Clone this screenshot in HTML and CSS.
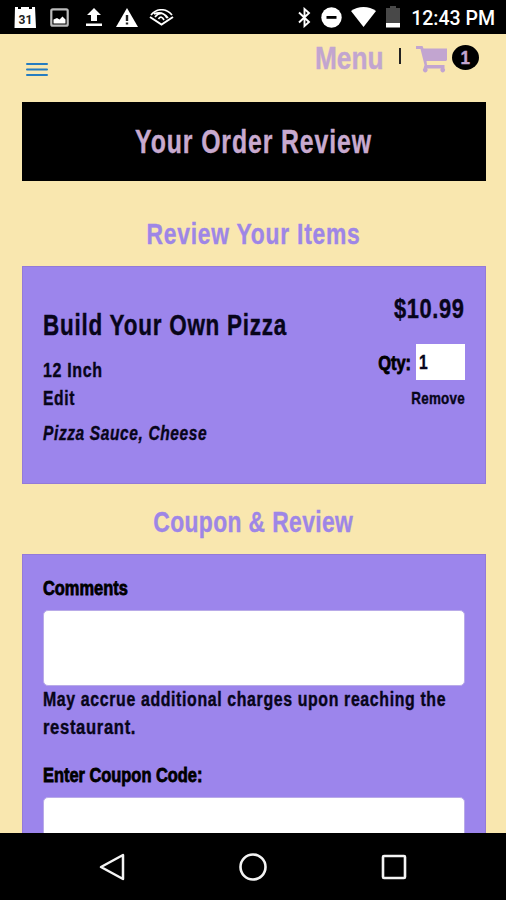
FILE: index.html
```html
<!DOCTYPE html>
<html lang="en">
<head>
<meta charset="utf-8">
<title>Your Order Review</title>
<link rel="stylesheet" href="styles.css">
</head>
<body>
<div class="screen">
  <div class="status">
    <div class="status-left">
      <svg width="23" height="24" viewBox="0 0 23 24"><path fill="#fff" d="M1 2h3v2h3V2h8v2h3V2h3l1 21H.5z"/><text x="11.5" y="18.5" text-anchor="middle" class="cal">31</text></svg>
      <svg class="photo" width="19" height="19" viewBox="0 0 19 19"><rect x="1.300" y="1.300" width="16.400" height="16.400" rx="1.500" fill="none" stroke="#bbb" stroke-width="2.200"/><path fill="#fff" d="M3.500 15.500v-4l3.500-1.500 2.500 1.500 3-3 3 3v4z"/></svg>
      <svg class="upload" width="16" height="18" viewBox="0 0 16 18"><path fill="#fff" d="M8 0l7 7h-4v6H5V7H1zM0 15.500h16V18H0z"/></svg>
      <svg class="warn" width="22" height="19" viewBox="0 0 22 19"><path fill="#fff" d="M11 0l11 19H0z"/><path fill="#222" d="M9.800 7h2.400v6H9.800zM9.800 14.500h2.400v2H9.800z"/></svg>
      <svg class="audible" width="25" height="17" viewBox="0 0 25 17"><g fill="none" stroke="#fff" stroke-width="2"><path d="M1 8l11.500 7.500L24 8"/><path stroke-width="1.700" d="M2 6C8-1 17-1 23 6M6 8c4-5 9-5 12 1M9.500 10c2-3 4-2 5.500 1M5 5c7-3 11 0 14 4"/></g></svg>
    </div>
    <div class="status-right">
      <svg class="bt" width="13" height="21" viewBox="0 0 13 21"><path fill="none" stroke="#fff" stroke-width="1.900" d="M1 5.500l10 9.500-4.500 4V2L11 6 1 15.500"/></svg>
      <svg class="dnd" width="21" height="21" viewBox="0 0 21 21"><circle cx="10.500" cy="10.500" r="10.200" fill="#fff"/><path fill="#000" d="M5.500 9h10v2.800h-10z"/></svg>
      <svg class="wifi" width="25" height="20" viewBox="0 0 25 20"><path fill="#fff" d="M12.500 20L0 4C7-1.300 18-1.300 25 4z"/></svg>
      <svg class="battery" width="14" height="22" viewBox="0 0 14 22"><path fill="#484848" d="M4 0h6v2h4v15H0V2h4z"/><path fill="#fff" d="M0 17h14v4.500H0z"/></svg>
      <span class="clock">12:43 PM</span>
    </div>
  </div>
  <main class="page">
    <header class="top">
      <svg class="burger" width="22" height="15" viewBox="0 0 22 15"><path stroke="#267dc0" stroke-width="2" stroke-linecap="round" d="M1 2h20M1 7.500h20M1 13h20"/></svg>
      <div class="links">
        <span class="menu"><span class="t">Menu</span></span>
        <span class="divider"></span>
        <svg class="cart" width="31" height="27" viewBox="0 0 31 27"><path fill="#c2a5d0" d="M0 0h6.500l1 2.500H31V14l-1 1H10.500l.5 4h17.500v3.500a2.300 2.300 0 1 1-3.500 0h-14a2.300 2.300 0 1 1-3.500 0L8.500 19 4.500 3H0z"/></svg>
        <span class="count"><span class="t">1</span></span>
      </div>
    </header>
    <h1 class="banner"><span class="t">Your Order Review</span></h1>
    <h2 class="heading first"><span class="t">Review Your Items</span></h2>
    <section class="card item">
      <div class="desc">
        <h3 class="name"><span class="t">Build Your Own Pizza</span></h3>
        <div class="line size"><span class="t">12 Inch</span></div>
        <div class="line edit"><span class="t">Edit</span></div>
        <div class="line toppings"><span class="t">Pizza Sauce, Cheese</span></div>
      </div>
      <div class="amount">
        <div class="price"><span class="t">$10.99</span></div>
        <div class="qty"><span class="label"><span class="t">Qty:</span></span><span class="num"><span class="t">1</span></span></div>
        <div class="remove"><span class="t">Remove</span></div>
      </div>
    </section>
    <h2 class="heading second"><span class="t">Coupon &amp; Review</span></h2>
    <section class="card form">
      <div class="label comments"><span class="t">Comments</span></div>
      <div class="box"></div>
      <p class="note"><span class="t">May accrue additional charges upon reaching the</span> <span class="t rest">restaurant.</span></p>
      <div class="label coupon"><span class="t">Enter Coupon Code:</span></div>
      <div class="box"></div>
    </section>
  </main>
  <nav class="nav">
    <svg width="26" height="28" viewBox="0 0 26 28"><path fill="none" stroke="#f4f4f4" stroke-width="2.500" stroke-linejoin="round" d="M24 2v24L2 14z"/></svg>
    <svg width="28" height="28" viewBox="0 0 28 28"><circle cx="14" cy="14" r="12.500" fill="none" stroke="#f4f4f4" stroke-width="2.600"/></svg>
    <svg width="26" height="26" viewBox="0 0 26 26"><rect x="2" y="2" width="22" height="22" rx="1" fill="none" stroke="#f4f4f4" stroke-width="2.600"/></svg>
  </nav>
</div>
</body>
</html>
```
FILE: styles.css
```css
* { box-sizing: border-box; }
body { margin: 0; background: #000; }
.screen { width: 506px; height: 900px; display: flex; flex-direction: column; overflow: hidden; font-family: "Liberation Sans", sans-serif; font-weight: 700; color: #08051a; }
h1, h2, h3, p { margin: 0; font-weight: 700; }
svg { display: block; flex: none; }
/* condensed lettering */
.t { display: inline-block; white-space: nowrap; transform: scaleX(.78); transform-origin: left; letter-spacing: .8px; -webkit-text-stroke: .4px currentColor; }
.status { flex: none; height: 34px; background: #000; display: flex; justify-content: space-between; padding: 0 11px 0 14px; }
.status-left, .status-right { display: flex; align-items: center; }
.cal { font: 700 12px Roboto, sans-serif; fill: #222; }
.photo { margin-left: 13px; }
.upload { margin-left: 17px; }
.warn { margin-left: 14px; }
.audible { margin-left: 11px; }
.dnd { margin-left: 10px; }
.wifi { margin-left: 9px; }
.battery { margin-left: 10px; }
.clock { margin: 3px 0 0 11px; font: 500 19.5px/30px Roboto, sans-serif; color: #fff; white-space: nowrap; }
.page { flex: none; height: 799px; overflow: hidden; background: #f9e7af; padding: 0 20.5px 0 22px; }
.top { height: 68px; display: flex; justify-content: space-between; padding: 0 7px 0 4px; }
.burger { margin-top: 28px; }
.links { display: flex; color: #c2a5d0; }
.menu { font-size: 32px; line-height: 48px; width: 69px; }
.menu .t { letter-spacing: 0; transform: scaleX(.82); }
.divider { width: 2px; height: 16px; background: #222; margin: 14px 0 0 15px; }
.cart { margin: 12px 0 0 15px; }
.count { width: 27px; height: 25px; margin: 11px 0 0 5px; border-radius: 50%; background: #000; text-align: center; font-size: 19px; line-height: 25px; }
.count .t { letter-spacing: 0; transform: scaleX(.9); transform-origin: center; }
.banner { height: 79px; background: #000; color: #c8aacf; text-align: center; font-size: 33px; line-height: 79px; }
.banner .t { letter-spacing: 1.2px; transform: scaleX(.752); transform-origin: center; }
.heading { color: #9e86e6; text-align: center; font-size: 30px; }
.heading .t { letter-spacing: 1px; transform: scaleX(.762); transform-origin: center; }
.first { height: 85px; line-height: 106px; }
.second { height: 70px; line-height: 76px; }
.second .t { letter-spacing: .5px; }
.card { background: #9c85ec; border: 1px solid #947ad8; }
.item { height: 218px; padding: 0 20px; display: flex; justify-content: space-between; }
.desc { width: 260px; flex: none; }
.name { font-size: 29px; line-height: 36px; margin-top: 40px; }
.name .t { letter-spacing: 1px; transform: scaleX(.774); }
.line { font-size: 20px; line-height: 28px; }
.size { margin-top: 13px; }
.size .t { transform: scaleX(.8); }
.toppings { margin-top: 7px; font-style: italic; }
.toppings .t { transform: scaleX(.775); }
.amount { display: flex; flex-direction: column; align-items: flex-end; }
.amount .t { transform-origin: right; }
.price { font-size: 28px; line-height: 34px; margin-top: 25px; }
.qty { display: flex; margin-top: 18px; }
.label { font-size: 20px; color: #000; }
.label .t { letter-spacing: 0; transform: scaleX(.82); -webkit-text-stroke-width: .8px; }
.qty .label { line-height: 38px; }
.num { width: 49px; height: 36px; background: #fff; margin-left: 5px; padding-left: 3px; font-size: 20px; line-height: 36px; }
.num .t { transform-origin: left; }
.remove { font-size: 17px; line-height: 24px; margin-top: 5px; }
.remove .t { letter-spacing: .3px; transform: scaleX(.79); }
.form { height: 320px; padding: 0 20px; }
.comments { line-height: 28px; margin-top: 19px; }
.box { height: 76px; margin-top: 8px; background: #fff; border: 1px solid #b9abe8; border-radius: 5px; }
.note { display: flex; flex-direction: column; align-items: flex-start; font-size: 20px; line-height: 28px; margin-top: -1px; }
.note .t { transform: scaleX(.794); }
.note .rest { transform: scaleX(.83); }
.coupon { line-height: 28px; margin-top: 20px; }
.nav { flex: none; height: 67px; background: #000; display: flex; align-items: center; justify-content: space-between; padding: 0 99px; }
```
